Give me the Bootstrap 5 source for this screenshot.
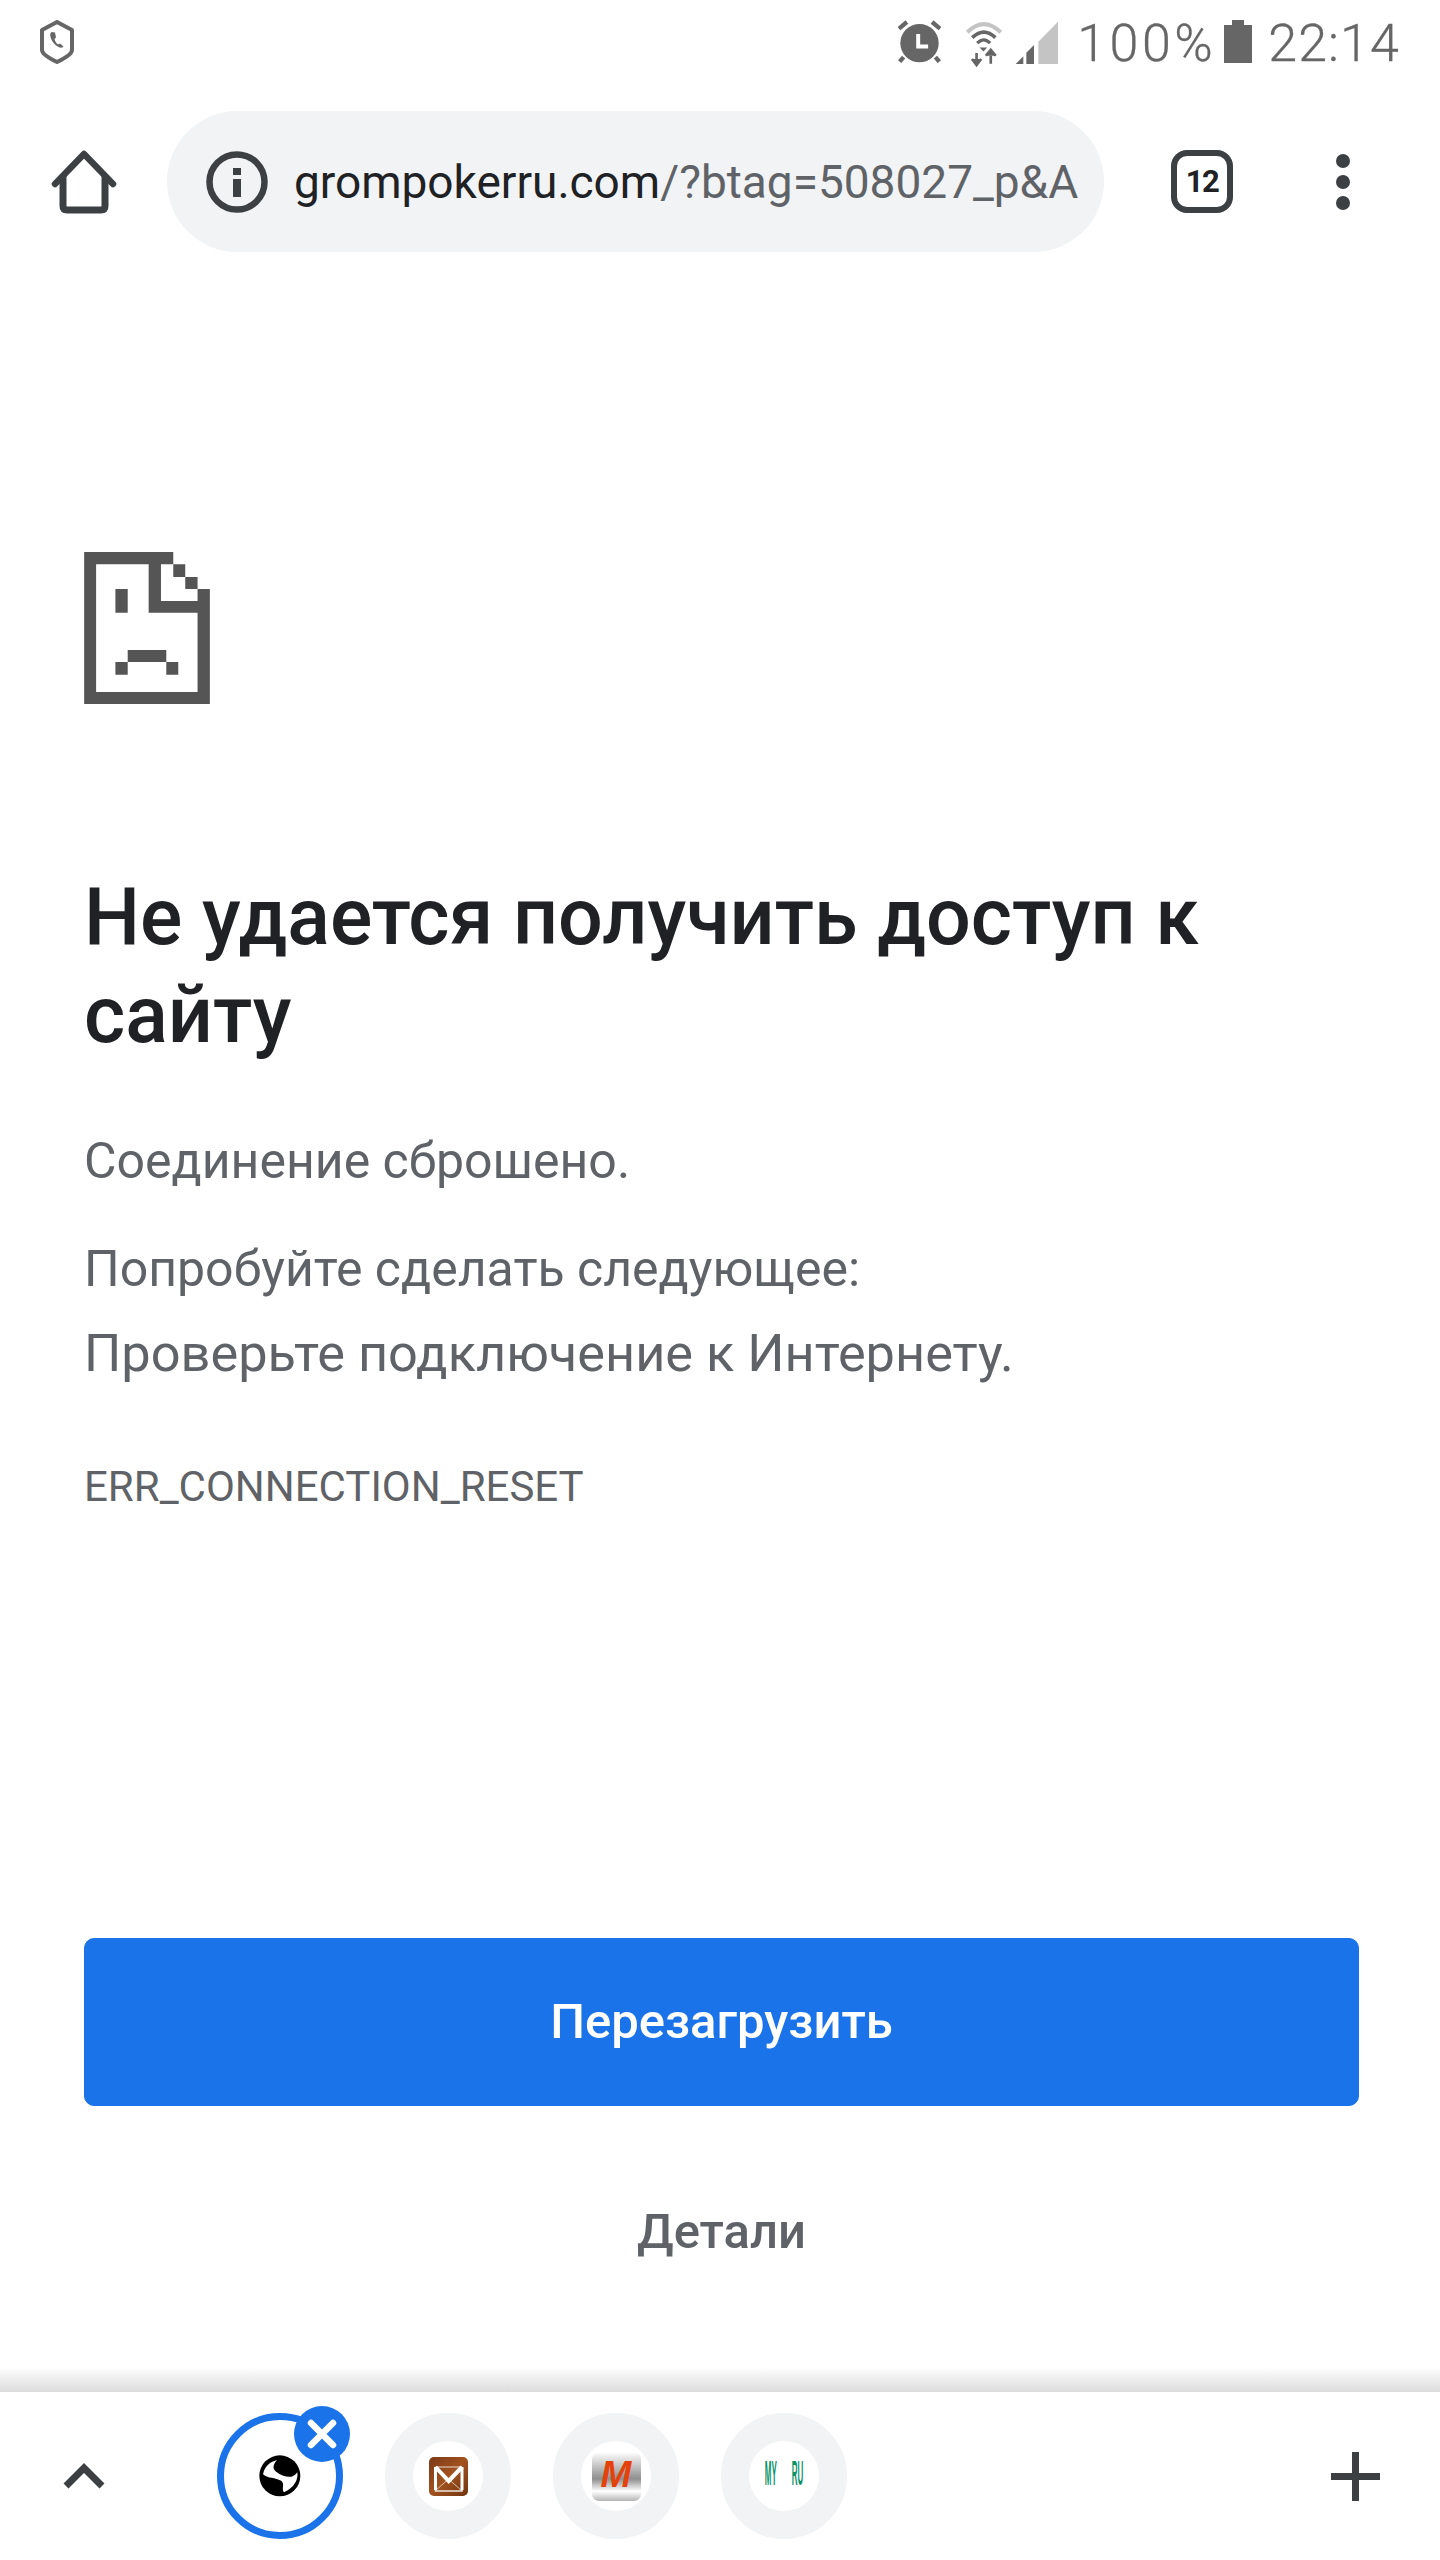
<!DOCTYPE html>
<html lang="ru">
<head>
<meta charset="utf-8">
<title>Не удается получить доступ к сайту</title>
<link href="https://cdn.jsdelivr.net/npm/bootstrap@5.3.0/dist/css/bootstrap.min.css" rel="stylesheet">
<style>
html,body{margin:0;background:#fff;}
body{font-family:Roboto,"Liberation Sans",sans-serif;}
.shell{width:1440px;height:2560px;overflow:hidden;}
.shell>*{flex:none;}
.statusline{height:111px;padding:20px 40px 0 39px;color:#666;}
.statusline svg{display:block;flex:none;}
.statustext{font-size:52px;line-height:44px;font-weight:300;letter-spacing:1.1px;white-space:nowrap;-webkit-text-stroke:.3px #666;margin-top:2px;margin-left:16px;}
.statustext.statuspct{letter-spacing:3.5px;margin-left:18px;}
.signalglyph{margin-left:11px;}
.toolline{height:141px;padding:0 0 0 50px;}
.urlpill{width:937px;height:141px;margin-left:49px;background:#f1f3f4;border-radius:71px;padding-left:39px;}
.urltext{margin-left:26px;font-size:46px;color:#5f6368;white-space:nowrap;line-height:1;}
.urltext b{font-weight:400;color:#202124;}
.tabcount{width:62px;height:63px;margin-left:67px;border:6px solid #3c4043;border-radius:16px;color:#202124;font-size:31px;font-weight:700;letter-spacing:-1.5px;line-height:1;}
.dotstack{margin-left:103px;gap:7px;}
.dotitem{width:14px;height:14px;border-radius:50%;background:#3c4043;}
.errorpane{padding:0 81px 0 84px;}
.sadpage{display:block;margin-top:300px;}
.errhead{margin:164px 0 0;font-size:79px;line-height:98px;font-weight:500;color:#202124;width:1200px;}
.errtext{font-size:50px;line-height:64px;color:#5f6368;margin:0;}
.errfirst{margin-top:65px;}
.errsecond{margin-top:44px;}
.errthird{margin-top:20px;font-size:52.300px;}
.errcode{font-size:42px;line-height:50px;color:#5f6368;margin:77px 0 0;}
.reloadbtn{--bs-btn-bg:#1a73e8;--bs-btn-border-color:#1a73e8;width:1275px;height:168px;margin-top:426px;border-radius:10px;font-size:49px;font-weight:500;color:#fff;display:flex;align-items:center;justify-content:center;}
.detailbtn{width:1275px;height:60px;margin-top:96px;padding:0;border:0;font-size:49px;font-weight:500;color:#5f6368;text-decoration:none;display:flex;align-items:center;justify-content:center;}
.shadestrip{height:25px;margin-top:105px;background:linear-gradient(#fff,#dcdcdc);}
.tabstrip{height:168px;padding:0 60px 0 63px;position:relative;}
.tabgroup{margin-left:112px;gap:42px;}
.tabdot{width:126px;height:126px;border-radius:50%;border:28px solid #f1f3f4;background:#fff;position:relative;}
.tabdot.activetab{border:7px solid #1a73e8;}
.closebubble{position:absolute;right:-14px;top:-14px;width:56px;height:56px;border-radius:50%;background:#1a73e8;display:flex;align-items:center;justify-content:center;}
.favwords{gap:15px;color:#0a9268;font-family:"Liberation Sans",sans-serif;font-weight:700;font-size:8px;line-height:8px;}
.favwords span{display:block;transform:scaleY(4.4);}
</style>
</head>
<body>
<div class="shell d-flex flex-column">
  <div class="statusline d-flex justify-content-between align-items-start">
    <svg width="36" height="44" viewBox="0 0 36 44"><path d="M18 2 33 10V30Q33 35 18 42 3 35 3 30V10Z" fill="none" stroke="#666" stroke-width="4" stroke-linejoin="round"/><path d="M12.500 12c-1.500 1-1.500 3-1 5 1 4 4 8 8 10 2 1 4 1 5-.5l-3.500-3-2 1c-2-1.500-3-3.500-3.500-5.500l1.500-1.500-1-5z" fill="#666"/></svg>
    <div class="d-flex align-items-start">
      <svg width="43" height="43" viewBox="25 30 130 130"><circle cx="90" cy="100" r="58" fill="#666"/><path d="M28 56 52 36M128 36 152 56M42 142 30 156M138 142 150 156" stroke="#666" stroke-width="13"/><path d="M86 72V110H116" fill="none" stroke="#fff" stroke-width="12"/></svg>
      <svg width="38" height="48" viewBox="225 20 115 145" class="ms-4"><path d="M232 57Q282 8 333 57" fill="none" stroke="#c4c4c4" stroke-width="12"/><path d="M247 73Q282 40 317 73" fill="none" stroke="#666" stroke-width="11"/><path d="M262 90Q282 70 301 90" fill="none" stroke="#666" stroke-width="10"/><path d="M269 103H292L281 115Z" fill="#666"/><path d="M260 120V145M246 138 260 156 274 138M303 152V128M288 128 303 110 318 128" fill="#666" stroke="#666" stroke-width="8"/></svg>
      <svg width="45" height="45" viewBox="375 25 135 135" class="signalglyph"><path d="M380 157H403V134Z" fill="#666"/><path d="M412 157H435V100L412 123Z" fill="#666"/><path d="M448 157H507V30L448 90Z" fill="#c4c4c4"/></svg>
      <span class="statustext statuspct">100%</span>
      <svg width="28" height="43" viewBox="0 0 28 43" class="ms-2"><path d="M8 0H20V5H28V43H0V5H8Z" fill="#666"/></svg>
      <span class="statustext">22:14</span>
    </div>
  </div>
  <div class="toolline d-flex align-items-center">
    <svg width="68" height="68" viewBox="50 148 68 68" class="flex-none"><path d="M55 184 84 154 113 184" fill="none" stroke="#3c4043" stroke-width="6.500" stroke-linecap="round" stroke-linejoin="round"/><path d="M63 176V206Q63 210 67 210H101Q105 210 105 206V176" fill="none" stroke="#3c4043" stroke-width="7"/></svg>
    <div class="urlpill d-flex align-items-center">
      <svg width="62" height="62" viewBox="0 0 62 62"><circle cx="31" cy="31" r="27.500" fill="none" stroke="#3c4043" stroke-width="6.500"/><rect x="27" y="17" width="8" height="7" fill="#3c4043"/><rect x="27" y="28" width="8" height="18" fill="#3c4043"/></svg>
      <span class="urltext"><b>grompokerru.com</b>/?btag=508027_p&amp;A</span>
    </div>
    <div class="tabcount d-flex align-items-center justify-content-center">12</div>
    <div class="dotstack d-flex flex-column"><span class="dotitem"></span><span class="dotitem"></span><span class="dotitem"></span></div>
  </div>
  <main class="errorpane">
    <svg class="sadpage" width="126" height="152" viewBox="72 67 378 457"><path fill="#555" d="M72 67H340V104H303V214H413V178H450V524H72ZM108 104V488H413V250H266V104Z"/><path fill="#555" d="M340 104H376V142H340ZM376 142H413V178H376ZM166 178H203V250H166ZM203 362H319V398H203ZM166 398H203V436H166ZM319 398H355V436H319Z"/></svg>
    <h1 class="errhead">Не удается получить доступ к сайту</h1>
    <p class="errtext errfirst">Соединение сброшено.</p>
    <p class="errtext errsecond">Попробуйте сделать следующее:</p>
    <p class="errtext errthird">Проверьте подключение к Интернету.</p>
    <p class="errcode">ERR_CONNECTION_RESET</p>
    <button type="button" class="btn btn-primary reloadbtn">Перезагрузить</button>
    <button type="button" class="btn btn-link detailbtn">Детали</button>
  </main>
  <div class="shadestrip"></div>
  <div class="tabstrip d-flex align-items-center">
    <svg width="42" height="26" viewBox="0 0 42 26"><path d="M3 23 21 5 39 23" fill="none" stroke="#3c4043" stroke-width="7"/></svg>
    <div class="tabgroup d-flex">
      <div class="tabdot activetab d-flex align-items-center justify-content-center">
        <svg width="42" height="42" viewBox="30 35 125 125"><circle cx="92" cy="97" r="61" fill="#000"/><path fill="#fff" d="M42 92C46 72 60 56 84 50 74 60 68 74 80 84 92 94 108 100 120 100 130 100 136 96 144 86 148 108 134 132 104 146 96 134 108 122 96 112 78 100 58 106 42 92Z"/></svg>
        <span class="closebubble"><svg width="30" height="30" viewBox="0 0 30 30"><path d="M4 4 26 26M26 4 4 26" stroke="#fff" stroke-width="6.500" stroke-linecap="round"/></svg></span>
      </div>
      <div class="tabdot d-flex align-items-center justify-content-center">
        <svg width="39" height="39" viewBox="0 0 39 39"><defs><linearGradient id="woodfav" x1="0" y1="0" x2="1" y2="1"><stop offset="0" stop-color="#7a3a18"/><stop offset=".5" stop-color="#a2521f"/><stop offset="1" stop-color="#70340f"/></linearGradient></defs><rect width="39" height="39" rx="5" fill="url(#woodfav)"/><path d="M6 34 19.500 22 33 34" fill="none" stroke="#d9c2b0" stroke-width="1"/><path d="M6.500 10V34H33V10" fill="none" stroke="#f0e6de" stroke-width="1.500"/><path d="M6.500 10V33M33 10V33" stroke="#fff" stroke-width="3"/><path d="M6.500 10H33" stroke="#e8d8cc" stroke-width="1"/><path d="M6.500 10 19.700 24 33 10" fill="none" stroke="#fff" stroke-width="4"/></svg>
      </div>
      <div class="tabdot d-flex align-items-center justify-content-center">
        <svg width="49" height="49" viewBox="0 0 49 49"><defs><linearGradient id="greyfav" x1="0" y1="0" x2="0" y2="1"><stop offset="0" stop-color="#fff"/><stop offset=".55" stop-color="#8e8e8e"/><stop offset=".8" stop-color="#fff"/><stop offset="1" stop-color="#b5b5b5"/></linearGradient></defs><rect width="49" height="49" rx="7" fill="url(#greyfav)"/><text x="24" y="35" text-anchor="middle" font-family="Liberation Sans" font-weight="700" font-style="italic" font-size="37" fill="#e4420a">M</text></svg>
      </div>
      <div class="tabdot d-flex align-items-center justify-content-center">
        <div class="favwords d-flex"><span>MY</span><span>RU</span></div>
      </div>
    </div>
    <svg width="49" height="49" viewBox="0 0 49 49" class="ms-auto"><path d="M24.500 0V49M0 24.500H49" stroke="#3c4043" stroke-width="7"/></svg>
  </div>
</div>
<script src="https://cdn.jsdelivr.net/npm/bootstrap@5.3.0/dist/js/bootstrap.bundle.min.js"></script>
</body>
</html>
